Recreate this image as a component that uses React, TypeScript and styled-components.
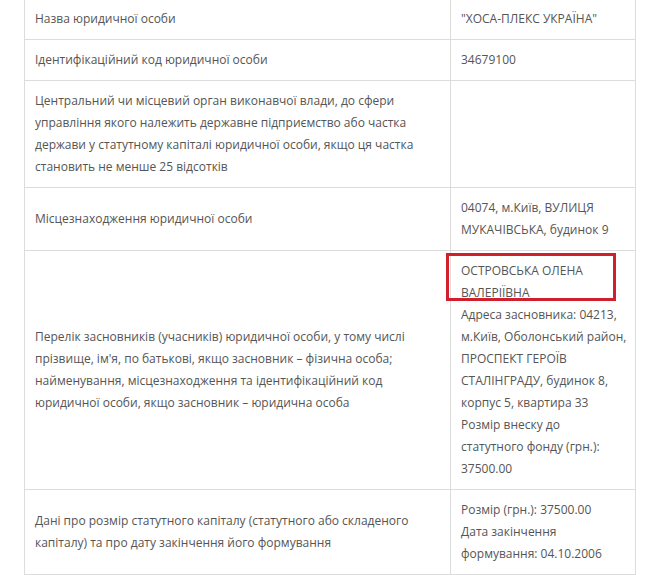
import React from "react";
import styled, { createGlobalStyle } from "styled-components";

const Global = createGlobalStyle`
  body {
    margin: 0;
    background: #fff;
    font-family: "Open Sans", "Noto Sans", sans-serif;
  }
`;

const S = {
  Page: styled.div`
    padding: 0 22px 0 24px;
    margin-top: -2px;
  `,
  Table: styled.table`
    width: 612px;
    table-layout: fixed;
    border-collapse: collapse;
    font-size: 12px;
    line-height: 22px;
    color: #555;
  `,
  Row: styled.tr``,
  LabelCell: styled.td`
    width: 405px;
    border: 1px solid #dcdcdc;
    padding: 9px 10px;
    vertical-align: middle;
    white-space: nowrap;
  `,
  ValueCell: styled.td`
    position: relative;
    border: 1px solid #dcdcdc;
    padding: 9px 10px;
    vertical-align: middle;
    white-space: nowrap;
  `,
  Highlight: styled.span`
    position: absolute;
    left: -5px;
    top: 2px;
    width: 170px;
    height: 48px;
    box-sizing: border-box;
    border: 3px solid #d0202e;
    pointer-events: none;
  `,
};

const Lines = ({ items }: { items: string[] }) => (
  <>
    {items.map((t, i) => (
      <React.Fragment key={i}>
        {i > 0 && <br />}
        {t}
      </React.Fragment>
    ))}
  </>
);

const rows: { label: string[]; value: string[]; marked?: boolean }[] = [
  { label: ["Назва юридичної особи"], value: ['"ХОСА-ПЛЕКС УКРАЇНА"'] },
  { label: ["Ідентифікаційний код юридичної особи"], value: ["34679100"] },
  {
    label: [
      "Центральний чи місцевий орган виконавчої влади, до сфери",
      "управління якого належить державне підприємство або частка",
      "держави у статутному капіталі юридичної особи, якщо ця частка",
      "становить не менше 25 відсотків",
    ],
    value: [],
  },
  {
    label: ["Місцезнаходження юридичної особи"],
    value: ["04074, м.Київ, ВУЛИЦЯ", "МУКАЧІВСЬКА, будинок 9"],
  },
  {
    label: [
      "Перелік засновників (учасників) юридичної особи, у тому числі",
      "прізвище, ім'я, по батькові, якщо засновник – фізична особа;",
      "найменування, місцезнаходження та ідентифікаційний код",
      "юридичної особи, якщо засновник – юридична особа",
    ],
    value: [
      "ОСТРОВСЬКА ОЛЕНА",
      "ВАЛЕРІЇВНА",
      "Адреса засновника: 04213,",
      "м.Київ, Оболонський район,",
      "ПРОСПЕКТ ГЕРОЇВ",
      "СТАЛІНГРАДУ, будинок 8,",
      "корпус 5, квартира 33",
      "Розмір внеску до",
      "статутного фонду (грн.):",
      "37500.00",
    ],
    marked: true,
  },
  {
    label: [
      "Дані про розмір статутного капіталу (статутного або складеного",
      "капіталу) та про дату закінчення його формування",
    ],
    value: ["Розмір (грн.): 37500.00", "Дата закінчення", "формування: 04.10.2006"],
  },
];

const App = () => {
  return (
    <S.Page>
      <Global />
      <S.Table>
        <tbody>
          {rows.map((r, i) => (
            <S.Row key={i}>
              <S.LabelCell>
                <Lines items={r.label} />
              </S.LabelCell>
              <S.ValueCell>
                {r.marked && <S.Highlight />}
                <Lines items={r.value} />
              </S.ValueCell>
            </S.Row>
          ))}
        </tbody>
      </S.Table>
    </S.Page>
  );
};

export default App;
